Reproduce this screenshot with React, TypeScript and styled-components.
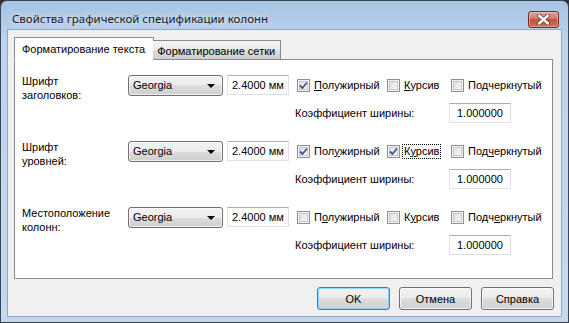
import React from 'react'
import styled, { createGlobalStyle } from 'styled-components'

const GlobalStyle = createGlobalStyle`
  html, body {
    margin: 0;
    padding: 0;
    background: #2f3338;
  }
  body {
    font-family: 'Liberation Sans', Arial, sans-serif;
    font-size: 11px;
    color: #000;
  }
`

type RowData = {
  label: string[]
  checks: { text: string; key: number; checked: boolean; focused?: boolean }[]
}

const rows: RowData[] = [
  {
    label: ['Шрифт', 'заголовков:'],
    checks: [
      { text: 'Полужирный', key: 0, checked: true },
      { text: 'Курсив', key: 0, checked: false },
      { text: 'Подчеркнутый', key: 2, checked: false },
    ],
  },
  {
    label: ['Шрифт', 'уровней:'],
    checks: [
      { text: 'Полужирный', key: 3, checked: true },
      { text: 'Курсив', key: 1, checked: true, focused: true },
      { text: 'Подчеркнутый', key: 3, checked: false },
    ],
  },
  {
    label: ['Местоположение', 'колонн:'],
    checks: [
      { text: 'Полужирный', key: 1, checked: false },
      { text: 'Курсив', key: 1, checked: false },
      { text: 'Подчеркнутый', key: 4, checked: false },
    ],
  },
]

function CheckMark() {
  return (
    <svg width="9" height="9" viewBox="0 0 9 9">
      <path
        d="M1 4.5 L3.5 7 L8 1.5"
        fill="none"
        stroke="#3f5b8f"
        strokeWidth="1.8"
        strokeLinejoin="round"
      />
    </svg>
  )
}

function CloseGlyph() {
  return (
    <svg width="13" height="11" viewBox="0 0 13 11">
      <path
        d="M2 1.5 L11 9.5 M11 1.5 L2 9.5"
        stroke="#6b3a36"
        strokeWidth="4"
        strokeLinecap="round"
      />
      <path
        d="M2 1.5 L11 9.5 M11 1.5 L2 9.5"
        stroke="#ffffff"
        strokeWidth="2.4"
        strokeLinecap="round"
      />
    </svg>
  )
}

// render label text with the access key letter underlined
const withKey = (text: string, key: number) => (
  <>
    {text.slice(0, key)}
    <AccessKey>{text[key]}</AccessKey>
    {text.slice(key + 1)}
  </>
)

function Option({ item }: { item: RowData['checks'][number] }) {
  return (
    <OptionItem>
      <Box>{item.checked && <CheckMark />}</Box>
      <OptionText $focused={item.focused}>{withKey(item.text, item.key)}</OptionText>
    </OptionItem>
  )
}

function FontRow({ row }: { row: RowData }) {
  return (
    <Row>
      <RowLabel>
        {row.label.map((l) => (
          <div key={l}>{l}</div>
        ))}
      </RowLabel>
      <Combo>
        Georgia
        <Arrow />
      </Combo>
      <SizeInput>2.4000 мм</SizeInput>
      <Options>
        <CheckLine>
          {row.checks.map((c) => (
            <Option key={c.text} item={c} />
          ))}
        </CheckLine>
        <CoefLine>
          <span>Коэффициент ширины:</span>
          <CoefInput>1.000000</CoefInput>
        </CoefLine>
      </Options>
    </Row>
  )
}

export default function App() {
  return (
    <>
      <GlobalStyle />
      <Window>
        <TitleBar>
          <Title>Свойства графической спецификации колонн</Title>
          <CloseButton>
            <CloseGlyph />
          </CloseButton>
        </TitleBar>
        <Client>
          <Tabs>
            <Tab $active>Форматирование текста</Tab>
            <Tab>Форматирование сетки</Tab>
          </Tabs>
          <Panel>
            {rows.map((r) => (
              <FontRow key={r.label.join(' ')} row={r} />
            ))}
          </Panel>
          <Buttons>
            <Button $default>OK</Button>
            <Button>Отмена</Button>
            <Button>Справка</Button>
          </Buttons>
        </Client>
      </Window>
    </>
  )
}

const Window = styled.div`
  width: 569px;
  height: 323px;
  box-sizing: border-box;
  border: 1px solid #3a4656;
  border-radius: 7px 7px 0 0;
  background: linear-gradient(#a6c3e4, #bdd4ed 40px, #c4d9ef);
  display: flex;
  flex-direction: column;
  padding: 0 7px 6px 7px;
`

const TitleBar = styled.div`
  height: 29px;
  display: flex;
  align-items: flex-start;
  padding: 0 2px 0 4px;
`

const Title = styled.div`
  font-family: 'Noto Sans', 'Open Sans', sans-serif;
  font-size: 11.5px;
  line-height: 16px;
  margin-top: 10px;
  color: #1b1b1b;
  text-shadow: 0 0 6px rgba(255, 255, 255, 0.9);
`

const CloseButton = styled.div`
  margin-left: auto;
  margin-top: 10px;
  width: 31px;
  height: 17px;
  box-sizing: border-box;
  border: 1px solid #6d2d25;
  border-radius: 3px;
  background: linear-gradient(#e6a194 0%, #d57a68 45%, #c4503c 50%, #d46b55 100%);
  box-shadow: inset 0 0 0 1px rgba(255, 220, 210, 0.45);
  display: flex;
  align-items: center;
  justify-content: center;
`

const Client = styled.div`
  flex: 1;
  background: #f0f0f0;
  box-shadow: 0 0 0 1px #92a7c0;
  display: flex;
  flex-direction: column;
  padding: 7px 8px 6px 6px;
`

const Tabs = styled.div`
  display: flex;
  align-items: flex-end;
  height: 23px;
  margin-bottom: -1px;
  position: relative;
  z-index: 1;
`

const Tab = styled.div<{ $active?: boolean }>`
  box-sizing: border-box;
  border: 1px solid #898c95;
  border-bottom: ${(p) => (p.$active ? '1px solid #fff' : '1px solid #898c95')};
  background: ${(p) => (p.$active ? '#fff' : 'linear-gradient(#f2f2f2, #ebebeb 50%, #dddddd 50%, #cfcfcf)')};
  height: ${(p) => (p.$active ? '23px' : '20px')};
  padding: ${(p) => (p.$active ? '4px 8px 0 7px' : '3px 5px 0 4px')};
  margin-left: ${(p) => (p.$active ? '0' : '-1px')};
  border-left: ${(p) => (p.$active ? '1px solid #898c95' : 'none')};
  line-height: 14px;
  white-space: nowrap;
`

const Panel = styled.div`
  flex: 1;
  background: #fff;
  border: 1px solid #898c95;
  padding: 15px 8px 0 7px;
  display: flex;
  flex-direction: column;
  gap: 18px;
`

const Row = styled.div`
  display: flex;
  align-items: flex-start;
`

const RowLabel = styled.div`
  width: 106px;
  line-height: 14px;
  margin-top: -1px;
`

const Combo = styled.div`
  position: relative;
  width: 95px;
  height: 21px;
  box-sizing: border-box;
  border: 1px solid #707070;
  border-radius: 3px;
  background: linear-gradient(#f2f2f2, #ebebeb 50%, #dddddd 50%, #cfcfcf);
  box-shadow: inset 0 0 0 1px rgba(255, 255, 255, 0.7);
  padding-left: 4px;
  line-height: 19px;
`

const Arrow = styled.span`
  position: absolute;
  right: 7px;
  top: 8px;
  border-left: 4px solid transparent;
  border-right: 4px solid transparent;
  border-top: 4px solid #000;
`

const fieldBorder = `
  box-sizing: border-box;
  height: 20px;
  border: 1px solid #dbdfe6;
  border-top-color: #abadb3;
  border-left-color: #e2e3ea;
  background: #fff;
  padding-left: 4px;
  line-height: 18px;
`

const SizeInput = styled.div`
  ${fieldBorder}
  width: 62px;
  margin-left: 4px;
`

const Options = styled.div`
  margin-left: 6px;
  display: flex;
  flex-direction: column;
`

const CheckLine = styled.div`
  display: grid;
  grid-template-columns: 90px 64px auto;
  height: 20px;
  align-items: center;
  padding-left: 2px;
`

const OptionItem = styled.div`
  display: flex;
  align-items: center;
`

const Box = styled.span`
  width: 13px;
  height: 13px;
  box-sizing: border-box;
  border: 1px solid #8e8f8f;
  background: linear-gradient(135deg, #dcdcdc, #fbfbfb);
  box-shadow: inset 0 0 0 1px #f4f4f4, inset 0 0 0 2px #c5c8cc;
  display: flex;
  align-items: center;
  justify-content: center;
  margin-right: 2px;
`

const OptionText = styled.span<{ $focused?: boolean }>`
  padding: 0 1px;
  line-height: 13px;
  border: 1px dotted ${(p) => (p.$focused ? '#000' : 'transparent')};
`

const AccessKey = styled.u`
  text-underline-offset: 1px;
`

const CoefLine = styled.div`
  display: flex;
  align-items: center;
  margin-top: 8px;
  & > span {
    width: 154px;
  }
`

const CoefInput = styled.div`
  ${fieldBorder}
  width: 62px;
  padding-left: 7px;
`

const Buttons = styled.div`
  display: flex;
  justify-content: flex-end;
  gap: 9px;
  margin-top: 8px;
  margin-right: -1px;
`

const Button = styled.div<{ $default?: boolean }>`
  width: 73px;
  height: 23px;
  box-sizing: border-box;
  border: 1px solid ${(p) => (p.$default ? '#3c7fb1' : '#707070')};
  border-radius: 3px;
  background: linear-gradient(#f2f2f2, #ebebeb 50%, #dddddd 50%, #cfcfcf);
  box-shadow: inset 0 0 0 1px ${(p) => (p.$default ? 'rgba(120, 210, 250, 0.8)' : 'rgba(255, 255, 255, 0.7)')};
  display: flex;
  align-items: center;
  justify-content: center;
`
